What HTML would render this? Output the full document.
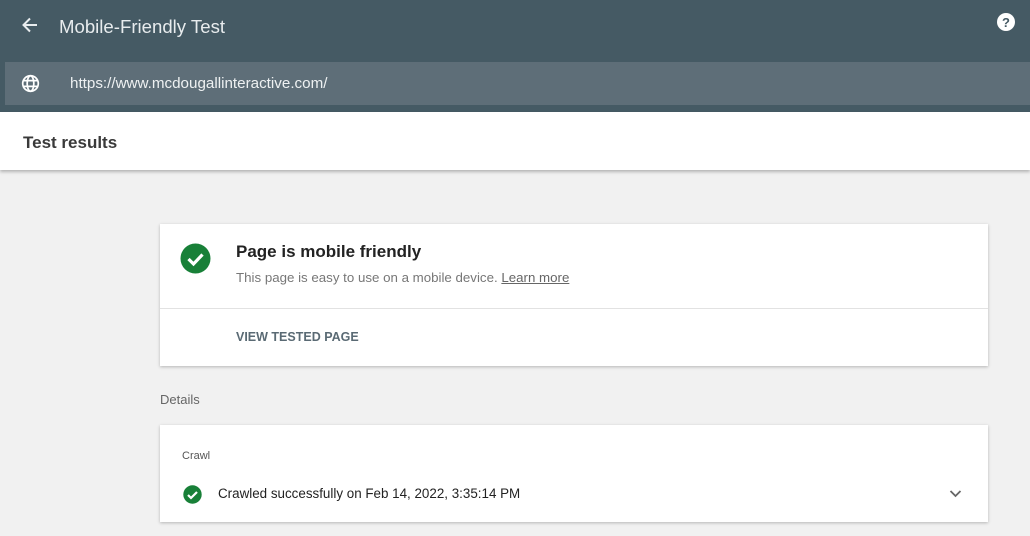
<!DOCTYPE html>
<html><head><style>
*{margin:0;padding:0;box-sizing:border-box}
body{width:1030px;height:536px;overflow:hidden;background:#f1f1f1;font-family:"Liberation Sans",sans-serif;position:relative}
.hdr{position:absolute;left:0;top:0;width:1030px;height:112px;background:#455a64}
.url{position:absolute;left:5px;top:62px;width:1025px;height:43px;background:#5e6e78}
.tr{position:absolute;left:0;top:112px;width:1030px;height:58px;background:#fff;box-shadow:0 2px 3px rgba(0,0,0,.25)}
.card{position:absolute;left:160px;background:#fff;width:828px;box-shadow:0 1px 3px rgba(0,0,0,.25)}
</style></head><body>
<div class="hdr">
<svg style="position:absolute;left:21px;top:16px" width="18" height="18" viewBox="0 0 18 18"><path d="M16 9H3M9 2.5L2.5 9 9 15.5" stroke="#e8ecee" stroke-width="2" fill="none"/></svg>
<div style="position:absolute;left:59px;top:16px;color:#e8ecee;font-size:18.6px">Mobile-Friendly Test</div>
<svg style="position:absolute;left:996px;top:12px" width="20" height="20" viewBox="0 0 20 20"><circle cx="10" cy="10" r="9" fill="#fff"/><text x="10" y="15" font-size="13" font-weight="bold" text-anchor="middle" fill="#455a64" font-family="Liberation Sans">?</text></svg>
</div>
<div class="url">
<svg style="position:absolute;left:16px;top:12px" width="19" height="19" viewBox="0 0 20 20" fill="none" stroke="#fff" stroke-width="1.8"><circle cx="10" cy="10" r="8.2"/><ellipse cx="10" cy="10" rx="3.5" ry="8.2"/><path d="M2 7h16M2 13h16"/></svg>
<div style="position:absolute;left:65px;top:13px;color:#eef1f2;font-size:15.2px">https://www.mcdougallinteractive.com/</div>
</div>
<div class="tr"><div style="position:absolute;left:23px;top:21px;font-size:17px;font-weight:bold;color:#3a3a3a">Test results</div></div>
<div class="card" style="top:224px;height:142px">
<svg style="position:absolute;left:20px;top:19px" width="31" height="31" viewBox="0 0 31 31"><circle cx="15.5" cy="15.5" r="15" fill="#188038"/><path d="M8.5 16l5 5 9-9.5" stroke="#fff" stroke-width="3.2" fill="none"/></svg>
<div style="position:absolute;left:76px;top:18px;font-size:17px;font-weight:bold;color:#222">Page is mobile friendly</div>
<div style="position:absolute;left:76px;top:46px;font-size:13.3px;color:#777">This page is easy to use on a mobile device. <span style="text-decoration:underline;color:#666">Learn more</span></div>
<div style="position:absolute;left:0;top:84px;width:100%;border-top:1px solid #e2e2e2"></div>
<div style="position:absolute;left:76px;top:106px;font-size:12.5px;font-weight:bold;color:#5a6a74">VIEW TESTED PAGE</div>
</div>
<div style="position:absolute;left:160px;top:392px;font-size:13px;color:#666">Details</div>
<div class="card" style="top:425px;height:97px">
<div style="position:absolute;left:22px;top:25px;font-size:11px;color:#555">Crawl</div>
<svg style="position:absolute;left:23px;top:60px" width="19" height="19" viewBox="0 0 19 19"><circle cx="9.5" cy="9.5" r="9.2" fill="#188038"/><path d="M5 10l3 3 6-6" stroke="#fff" stroke-width="2.2" fill="none"/></svg>
<div style="position:absolute;left:58px;top:61px;font-size:13.4px;color:#222">Crawled successfully on Feb 14, 2022, 3:35:14 PM</div>
<svg style="position:absolute;left:789px;top:64px" width="13" height="9" viewBox="0 0 13 9"><path d="M1.5 2l5 5 5-5" stroke="#666" stroke-width="1.8" fill="none"/></svg>
</div>
</body></html>
